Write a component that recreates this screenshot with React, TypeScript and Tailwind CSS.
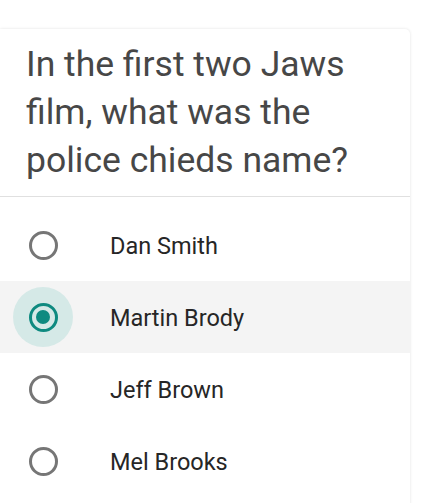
import React, { useState } from 'react';

const options = ['Dan Smith', 'Martin Brody', 'Jeff Brown', 'Mel Brooks'];

const Radio: React.FC<{ checked: boolean }> = ({ checked }) => (
    <div
        className={`w-[60px] h-[60px] rounded-full flex items-center justify-center ${checked ? 'bg-[#d5e9e7]' : ''}`}
    >
        {checked ? (
            <div className="w-[29px] h-[29px] rounded-full border-[3px] border-[#0e8a80] flex items-center justify-center">
                <div className="w-[14px] h-[14px] rounded-full bg-[#0e8a80]" />
            </div>
        ) : (
            <div className="w-[29px] h-[29px] rounded-full border-[3px] border-[#767676]" />
        )}
    </div>
);

export default function App() {
    const [selected, setSelected] = useState(1);

    return (
        <div className="w-[422px] h-[503px] bg-white overflow-hidden pt-[29px] pr-[12px]" style={{ fontFamily: 'Roboto, "Noto Sans", sans-serif' }}>
            <div className="bg-white rounded-r-[5px] shadow-[0_0_3px_rgba(0,0,0,0.12)] h-[520px]">
                <div className="pl-[26px] pr-[16px] pt-[11px] pb-[12px] border-b border-[#e0e0e0]">
                    <h1 className="text-[35.5px] leading-[48px] text-[#474747] font-normal">
                        In the first two Jaws film, what was the police chieds name?
                    </h1>
                </div>
                <div className="pt-[12px]">
                    {options.map((opt, i) => (
                        <div
                            key={opt}
                            onClick={() => setSelected(i)}
                            className={`h-[72px] flex items-center pl-[13px] cursor-pointer ${selected === i ? 'bg-[#f4f4f4]' : ''}`}
                        >
                            <Radio checked={selected === i} />
                            <span className="ml-[37px] mt-[3px] text-[23.5px] text-[#262626]">{opt}</span>
                        </div>
                    ))}
                </div>
            </div>
        </div>
    );
}
